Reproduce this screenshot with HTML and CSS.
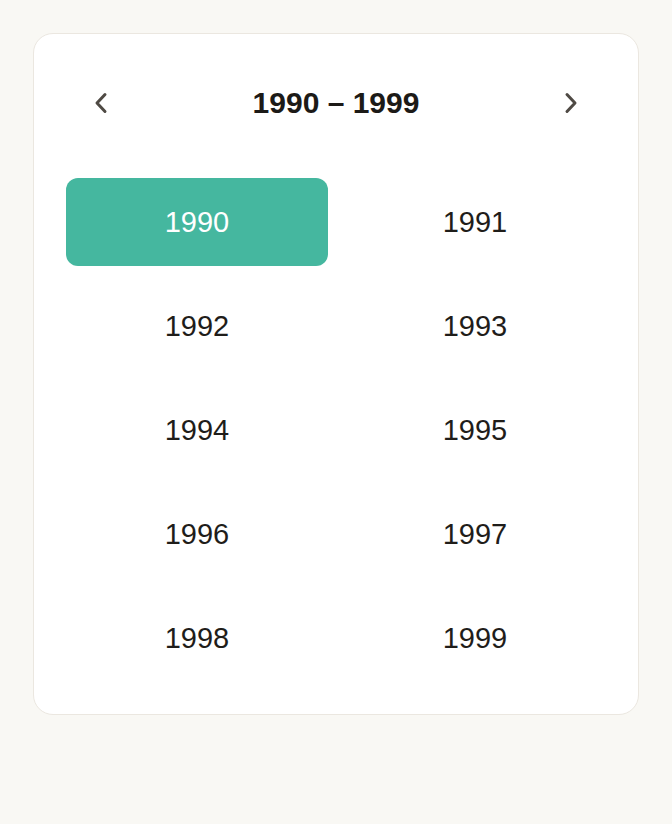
FILE: index.html
```html
<!DOCTYPE html>
<html lang="en">
<head>
    <meta charset="UTF-8">
    <meta name="viewport" content="width=device-width, initial-scale=1.0">
    <title>Decade picker</title>
    <link rel="stylesheet" href="styles.css">
</head>
<body>

    <div class="picker">
        <!-- Header with decade navigation -->
        <div class="picker-header">
            <button class="nav-btn" aria-label="Previous decade">
                <svg width="14" height="22" viewBox="0 0 14 22">
                    <path d="M11 2.5 L3 11 L11 19.5" fill="none" stroke="currentColor" stroke-width="3" stroke-linecap="round" stroke-linejoin="round"/>
                </svg>
            </button>
            <div class="picker-title">1990 – 1999</div>
            <button class="nav-btn" aria-label="Next decade">
                <svg width="14" height="22" viewBox="0 0 14 22">
                    <path d="M3 2.5 L11 11 L3 19.5" fill="none" stroke="currentColor" stroke-width="3" stroke-linecap="round" stroke-linejoin="round"/>
                </svg>
            </button>
        </div>

        <!-- Years -->
        <div class="years">
            <button class="year selected">1990</button>
            <button class="year">1991</button>
            <button class="year">1992</button>
            <button class="year">1993</button>
            <button class="year">1994</button>
            <button class="year">1995</button>
            <button class="year">1996</button>
            <button class="year">1997</button>
            <button class="year">1998</button>
            <button class="year">1999</button>
        </div>
    </div>

</body>
</html>
```

FILE: styles.css
```css
body {
    font-family: "Liberation Sans", Arial, sans-serif;
    background-color: #f9f8f4;
    color: #1f1d1a;
    margin: 0;
    padding: 33px;
}

.picker {
    width: 540px;
    padding: 32px;
    background-color: #fff;
    border: 1px solid #ebe7e0;
    border-radius: 20px;
}

.picker-header {
    display: flex;
    align-items: center;
    justify-content: space-between;
    height: 74px;
    padding: 0 17px;
    margin-bottom: 38px;
}

.nav-btn {
    width: 36px;
    height: 36px;
    display: flex;
    align-items: center;
    justify-content: center;
    background: none;
    border: none;
    padding: 0;
    color: #4f4a44;
    cursor: pointer;
}

.picker-title {
    font-size: 30px;
    font-weight: bold;
    color: #1c1a17;
}

.years {
    display: grid;
    grid-template-columns: 1fr 1fr;
    gap: 16px;
}

.year {
    height: 88px;
    padding-top: 2px;
    font-family: inherit;
    font-size: 29px;
    color: #1f1d1a;
    background: none;
    border: none;
    border-radius: 12px;
    cursor: pointer;
}

.year.selected {
    background-color: #45b79f;
    color: #fff;
}
```
